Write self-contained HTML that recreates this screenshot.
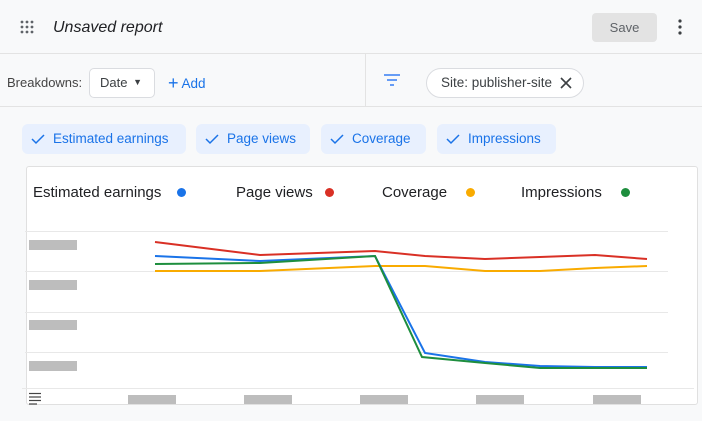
<!DOCTYPE html>
<html><head><style>
*{box-sizing:border-box;margin:0;padding:0}
body{width:702px;height:421px;background:#f8f9fa;font-family:"Liberation Sans",Arial,sans-serif;position:relative;overflow:hidden;color:#202124}
.abs{position:absolute}
.chip{position:absolute;top:124px;height:30px;background:#e8f0fe;border-radius:6px;color:#1a73e8;font-size:13.5px;line-height:30px;padding-left:31px}
.chip svg{position:absolute;left:9px;top:9px}
.ph{position:absolute;background:#bdbdbd;width:48px;height:10px}
.leg{position:absolute;top:184px;font-size:15px;color:#202124}
.dot{position:absolute;top:188px;width:9px;height:9px;border-radius:50%}
</style></head><body>
<svg class="abs" style="left:20px;top:20px" width="14" height="14"><g fill="#5f6368"><circle cx="2" cy="2" r="1.4"/><circle cx="7" cy="2" r="1.4"/><circle cx="12" cy="2" r="1.4"/><circle cx="2" cy="7" r="1.4"/><circle cx="7" cy="7" r="1.4"/><circle cx="12" cy="7" r="1.4"/><circle cx="2" cy="12" r="1.4"/><circle cx="7" cy="12" r="1.4"/><circle cx="12" cy="12" r="1.4"/></g></svg>
<div class="abs" style="left:53px;top:19px;font-size:16px;font-style:italic">Unsaved report</div>
<div class="abs" style="left:592px;top:13px;width:65px;height:29px;background:#e3e3e3;border-radius:4px;color:#5f6368;font-size:13px;text-align:center;line-height:29px">Save</div>
<svg class="abs" style="left:677px;top:19px" width="6" height="16"><g fill="#3c4043"><circle cx="3" cy="2" r="1.6"/><circle cx="3" cy="8" r="1.6"/><circle cx="3" cy="14" r="1.6"/></g></svg>
<div class="abs" style="left:0;top:53px;width:702px;height:1px;background:#e3e3e3"></div>
<div class="abs" style="left:0;top:106px;width:702px;height:1px;background:#e3e3e3"></div>
<div class="abs" style="left:365px;top:54px;width:1px;height:52px;background:#e3e3e3"></div>
<div class="abs" style="left:7px;top:75px;font-size:13px;color:#444">Breakdowns:</div>
<div class="abs" style="left:89px;top:68px;width:66px;height:30px;background:#fff;border:1px solid #dadce0;border-radius:5px;font-size:13px;color:#3c4043;line-height:28px;padding-left:10px">Date <span style="font-size:9px;position:relative;top:-2px;left:2px">▼</span></div>
<div class="abs" style="left:168px;top:72px;font-size:13.5px;color:#1a73e8"><span style="font-size:18px;position:relative;top:1px">+</span> Add</div>
<svg class="abs" style="left:384px;top:74px" width="16" height="12"><g stroke="#4285f4" stroke-width="1.6"><line x1="0" y1="1" x2="16" y2="1"/><line x1="3" y1="6" x2="13" y2="6"/><line x1="6" y1="11" x2="10" y2="11"/></g></svg>
<div class="abs" style="left:426px;top:68px;width:158px;height:30px;background:#fff;border:1px solid #dadce0;border-radius:15px;font-size:13.5px;color:#3c4043;line-height:28px;padding-left:14px">Site: publisher-site</div>
<svg class="abs" style="left:560px;top:77px" width="12" height="12"><path d="M1 1L11 11M11 1L1 11" stroke="#3c4043" stroke-width="1.6"/></svg>
<div class="chip" style="left:22px;width:164px"><svg width="14" height="12"><path d="M1 6l4 4 8-8" fill="none" stroke="#1a73e8" stroke-width="1.5"/></svg>Estimated earnings</div>
<div class="chip" style="left:196px;width:114px"><svg width="14" height="12"><path d="M1 6l4 4 8-8" fill="none" stroke="#1a73e8" stroke-width="1.5"/></svg>Page views</div>
<div class="chip" style="left:321px;width:105px"><svg width="14" height="12"><path d="M1 6l4 4 8-8" fill="none" stroke="#1a73e8" stroke-width="1.5"/></svg>Coverage</div>
<div class="chip" style="left:437px;width:119px"><svg width="14" height="12"><path d="M1 6l4 4 8-8" fill="none" stroke="#1a73e8" stroke-width="1.5"/></svg>Impressions</div>
<div class="abs" style="left:26px;top:166px;width:672px;height:239px;background:#fff;border:1px solid #e0e0e0;border-radius:3px"></div>
<div class="leg" style="left:33px">Estimated earnings</div><div class="dot" style="left:177px;background:#1a73e8"></div>
<div class="leg" style="left:236px">Page views</div><div class="dot" style="left:325px;background:#d93025"></div>
<div class="leg" style="left:382px">Coverage</div><div class="dot" style="left:466px;background:#f9ab00"></div>
<div class="leg" style="left:521px">Impressions</div><div class="dot" style="left:621px;background:#1e8e3e"></div>
<svg class="abs" style="left:0;top:0" width="702" height="421">
<g stroke="#e8e8e8" stroke-width="1"><line x1="25" y1="231.5" x2="668" y2="231.5"/><line x1="25" y1="271.5" x2="668" y2="271.5"/><line x1="25" y1="312.5" x2="668" y2="312.5"/><line x1="25" y1="352.5" x2="668" y2="352.5"/><line x1="22" y1="388.5" x2="694" y2="388.5"/></g>
<g fill="none" stroke-width="2">
<polyline stroke="#f9ab00" points="155,271 260,271 375,266 425,266 485,271 540,271 595,268 647,266"/>
<polyline stroke="#d93025" points="155,242 260,255 375,251 425,256 485,259 540,257 595,255 647,259"/>
<polyline stroke="#1a73e8" points="155,256 260,261 375,256 425,353 485,362 540,366 595,367 647,367"/>
<polyline stroke="#1e8e3e" points="155,264 260,263 375,256 422,357 485,363 540,368 595,368 647,368"/>
</g>
<g stroke="#444" stroke-width="1.2"><line x1="29" y1="393.5" x2="41" y2="393.5"/><line x1="29" y1="397" x2="41" y2="397"/><line x1="29" y1="400.5" x2="41" y2="400.5"/><line x1="29" y1="404" x2="37" y2="404"/></g>
</svg>
<div class="ph" style="left:29px;top:240px"></div><div class="ph" style="left:29px;top:280px"></div><div class="ph" style="left:29px;top:320px"></div><div class="ph" style="left:29px;top:361px"></div>
<div class="ph" style="left:128px;top:395px;height:9px"></div><div class="ph" style="left:244px;top:395px;height:9px"></div><div class="ph" style="left:360px;top:395px;height:9px"></div><div class="ph" style="left:476px;top:395px;height:9px"></div><div class="ph" style="left:593px;top:395px;height:9px"></div>
</body></html>
